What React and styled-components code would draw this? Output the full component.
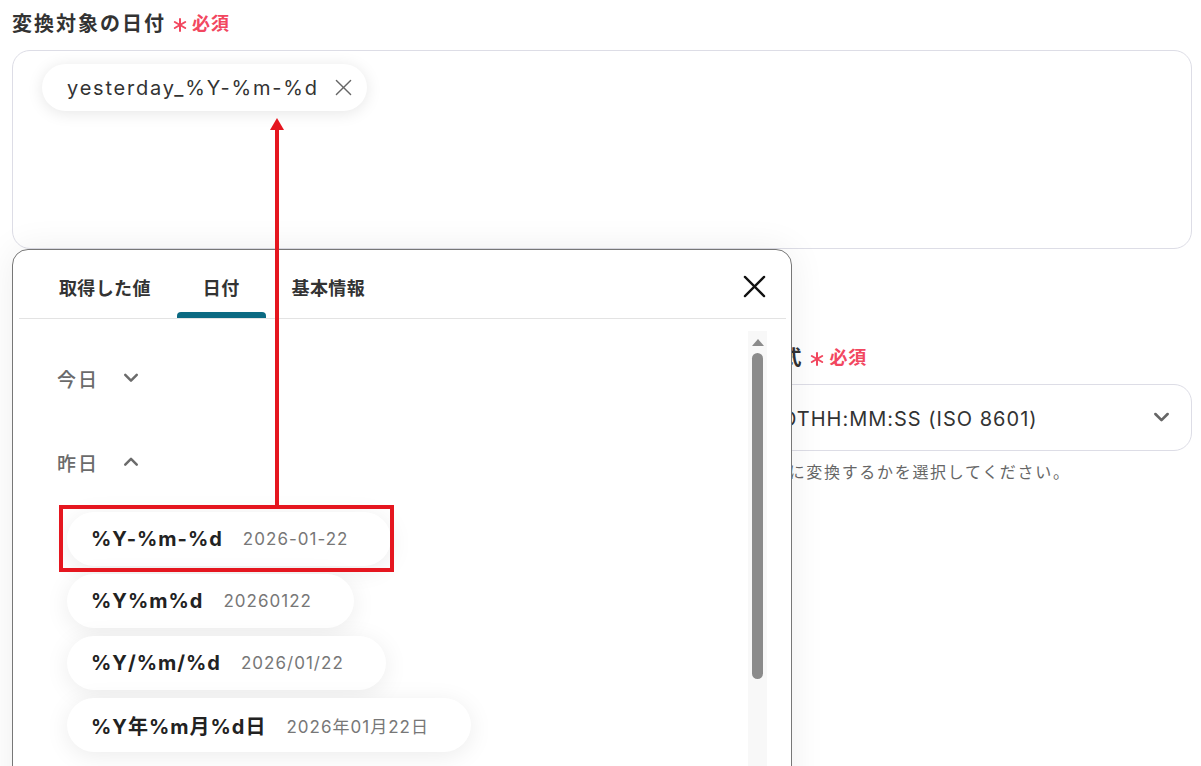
import styled, { createGlobalStyle } from 'styled-components';

const GlobalStyle = createGlobalStyle`
  html, body {
    margin: 0;
    background: #fff;
    overflow: hidden;
  }
  body {
    font-family: Inter, "Noto Sans CJK JP", sans-serif;
    color: #333;
  }
  * {
    box-sizing: border-box;
  }
`;

const Page = styled.div`
  position: relative;
  width: 1201px;
  height: 766px;
  padding: 8px 9px 0 12px;
  overflow: hidden;
`;

const Field = styled.section`
  margin-bottom: ${p => p.$gap || 0}px;
`;

const FieldLabel = styled.div`
  display: flex;
  align-items: center;
  height: 28px;
  font-size: 20px;
  font-weight: 700;
  letter-spacing: 0.1em;
  color: #333;
  white-space: nowrap;
`;

const Required = styled.span`
  display: inline-flex;
  align-items: center;
  gap: 5px;
  margin-left: 7px;
  font-size: 18px;
  font-weight: 700;
  letter-spacing: 0.05em;
  color: #f2475f;

  svg {
    margin-top: 5px;
  }
`;

const InputBox = styled.div`
  margin-top: 14px;
  height: 199px;
  border: 1px solid #dddde6;
  border-radius: 18px;
  padding: 13px 29px;
`;

const Chip = styled.div`
  display: inline-flex;
  align-items: center;
  gap: 16px;
  height: 47px;
  padding: 0 15px 0 25px;
  border-radius: 24px;
  background: #fff;
  box-shadow: 0 2px 16px rgba(0, 0, 0, 0.1);
  font-size: 20px;
  letter-spacing: 0.09em;
  color: #333;
`;

const HelpText = styled.p`
  margin: 9px 0 0;
  font-size: 16px;
  line-height: 24px;
  letter-spacing: 0.105em;
  color: #666;
  white-space: nowrap;
`;

const SelectBox = styled.div`
  margin-top: 14px;
  height: 67px;
  display: flex;
  align-items: center;
  justify-content: space-between;
  padding: 0 21px 0 24px;
  border: 1px solid #dddde6;
  border-radius: 18px;
  font-size: 20px;
  letter-spacing: 0.05em;
  color: #333;
  white-space: nowrap;
`;

const Popup = styled.div`
  position: absolute;
  left: 12px;
  top: 249px;
  width: 780px;
  height: 620px;
  display: flex;
  flex-direction: column;
  background: #fff;
  border: 1px solid #777;
  border-radius: 16px 16px 0 0;
  box-shadow: 0 0 36px rgba(0, 0, 0, 0.07);
`;

const TabBar = styled.div`
  display: flex;
  height: 69px;
  margin: 0 5px 0 6px;
  padding-left: 14px;
  border-bottom: 1px solid #e3e3e3;
`;

const Tab = styled.div`
  position: relative;
  display: flex;
  align-items: center;
  padding: 6px 26px 0;
  font-size: 18px;
  font-weight: 600;
  letter-spacing: 0.02em;
  color: #333;

  &::after {
    content: '';
    display: ${p => (p.$active ? 'block' : 'none')};
    position: absolute;
    left: 0;
    right: 0;
    bottom: 0;
    height: 6px;
    border-radius: 4px 4px 0 0;
    background: #0b6a82;
  }
`;

const CloseButton = styled.button`
  margin-left: auto;
  margin-right: 20px;
  padding: 4px 0 0;
  border: 0;
  background: none;
  display: flex;
  align-items: center;
`;

const Body = styled.div`
  flex: 1;
  display: flex;
  min-height: 0;
`;

const List = styled.div`
  flex: 1;
  padding: 39px 0 0 44px;
`;

const Section = styled.div`
  margin-bottom: 44px;
`;

const SectionHeader = styled.div`
  display: flex;
  align-items: center;
  gap: 24px;
  height: 40px;
  font-size: 19px;
  font-weight: 500;
  letter-spacing: 0.1em;
  color: #6b6b6b;
`;

const Options = styled.div`
  display: flex;
  flex-direction: column;
  align-items: flex-start;
  gap: 8px;
  margin-top: 30px;
  padding-left: 10px;
`;

const Option = styled.div`
  display: flex;
  align-items: center;
  gap: 20px;
  height: 54px;
  padding: 0 42px 0 24px;
  border-radius: 27px;
  background: #fff;
  box-shadow: 0 4px 24px rgba(0, 0, 0, 0.08);
  white-space: nowrap;
`;

const OptionFormat = styled.span`
  font-size: 20px;
  font-weight: 700;
  letter-spacing: 0.05em;
  color: #222;
`;

const OptionSample = styled.span`
  font-size: 17px;
  letter-spacing: 0.06em;
  color: #777;
`;

const ScrollTrack = styled.div`
  width: 19px;
  margin: 12px 24px 0 0;
  background: #f8f8f8;
  display: flex;
  flex-direction: column;
  align-items: center;
`;

const ScrollArrow = styled.div`
  margin-top: 8px;
  width: 0;
  height: 0;
  border-left: 6px solid transparent;
  border-right: 6px solid transparent;
  border-bottom: 7px solid #8b8b8b;
`;

const ScrollThumb = styled.div`
  margin-top: 7px;
  width: 11px;
  height: 326px;
  border-radius: 6px;
  background: #8b8b8b;
`;

const Annotation = styled.svg`
  position: absolute;
  left: 0;
  top: 0;
  pointer-events: none;
`;

const Asterisk = () => (
  <svg width="14" height="14" viewBox="0 0 14 14" stroke="#f2475f" strokeWidth="2" strokeLinecap="round">
    <line x1="7" y1="1" x2="7" y2="13" />
    <line x1="1.8" y1="4" x2="12.2" y2="10" />
    <line x1="1.8" y1="10" x2="12.2" y2="4" />
  </svg>
);

const Cross = ({ size, color, width }) => (
  <svg width={size} height={size} viewBox="0 0 24 24" stroke={color} strokeWidth={width} strokeLinecap="round">
    <line x1="2" y1="2" x2="22" y2="22" />
    <line x1="22" y1="2" x2="2" y2="22" />
  </svg>
);

const Chevron = ({ up, color = '#6b6b6b', w = 16 }) => (
  <svg width={w} height={w * 0.6} viewBox="0 0 16 10" fill="none" stroke={color} strokeWidth="2.6" strokeLinecap="round" strokeLinejoin="round">
    {up ? <polyline points="2,8 8,2 14,8" /> : <polyline points="2,2 8,8 14,2" />}
  </svg>
);

const options = [
  { format: '%Y-%m-%d', sample: '2026-01-22' },
  { format: '%Y%m%d', sample: '20260122' },
  { format: '%Y/%m/%d', sample: '2026/01/22' },
  { format: '%Y年%m月%d日', sample: '2026年01月22日' },
];

const tabs = ['取得した値', '日付', '基本情報'];

const App = () => (
  <Page>
    <GlobalStyle />

    <Field $gap={60}>
      <FieldLabel>
        変換対象の日付
        <Required>
          <Asterisk />
          必須
        </Required>
      </FieldLabel>
      <InputBox>
        <Chip>
          yesterday_%Y-%m-%d
          <Cross size={17} color="#666" width={2} />
        </Chip>
      </InputBox>
      <HelpText>変換したい日付を入力してください。</HelpText>
    </Field>

    <Field>
      <FieldLabel>
        変換後の日付の形式は後続の処理で使用する日付文字列として出力する表示形式
        <Required>
          <Asterisk />
          必須
        </Required>
      </FieldLabel>
      <SelectBox>
        <span>日付と時刻（タイムゾーンなし）を表す国際標準規格の表記法：  YYYY-MM-DDTHH:MM:SS (ISO 8601)</span>
        <Chevron color="#666" w={17} />
      </SelectBox>
      <HelpText>
        変換対象の日付を後続のオペレーションで利用しやすいように、日付と時刻の表記をどのような形に変換するかを選択してください。
      </HelpText>
    </Field>

    <Popup>
      <TabBar>
        {tabs.map(t => (
          <Tab key={t} $active={t === '日付'}>
            {t}
          </Tab>
        ))}
        <CloseButton>
          <Cross size={23} color="#111" width={2.4} />
        </CloseButton>
      </TabBar>
      <Body>
        <List>
          <Section>
            <SectionHeader>
              今日
              <Chevron />
            </SectionHeader>
          </Section>
          <Section>
            <SectionHeader>
              昨日
              <Chevron up />
            </SectionHeader>
            <Options>
              {options.map(o => (
                <Option key={o.format}>
                  <OptionFormat>{o.format}</OptionFormat>
                  <OptionSample>{o.sample}</OptionSample>
                </Option>
              ))}
            </Options>
          </Section>
        </List>
        <ScrollTrack>
          <ScrollArrow />
          <ScrollThumb />
        </ScrollTrack>
      </Body>
    </Popup>

    <Annotation width="1201" height="766" viewBox="0 0 1201 766">
      <rect x="61" y="507" width="331" height="63" fill="none" stroke="#e5161f" strokeWidth="4" />
      <line x1="277" y1="507" x2="277" y2="128" stroke="#e5161f" strokeWidth="4" />
      <polygon points="277,118 270,130 284,130" fill="#e5161f" />
    </Annotation>
  </Page>
);

export default App;
